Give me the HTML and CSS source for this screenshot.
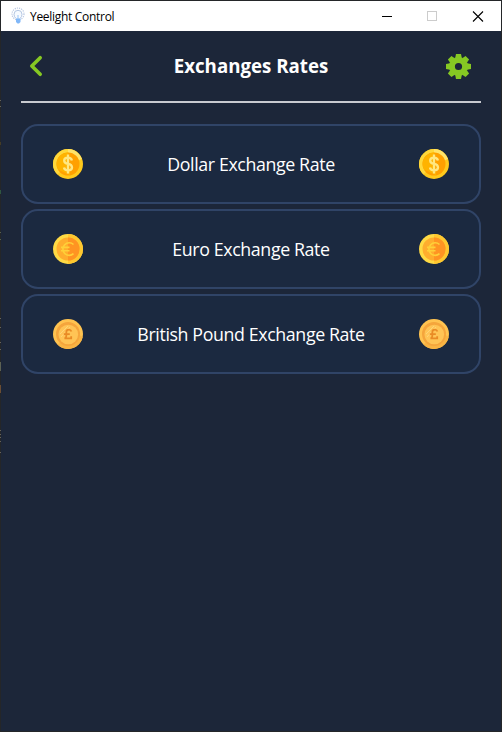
FILE: index.html
```html
<!DOCTYPE html>
<html lang="en">
<head>
<meta charset="utf-8">
<title>Yeelight Control</title>
<link rel="stylesheet" href="styles.css">
</head>
<body>
<svg class="defs" width="0" height="0" aria-hidden="true">
  <defs>
    <symbol id="dollar" viewBox="0 0 30 30">
      <circle cx="15" cy="15" r="15" fill="#ffc91c"/>
      <path d="M0 15A15 15 0 0 1 25.6 4.4L4.4 25.6A15 15 0 0 1 0 15Z" fill="#ffd83b"/>
      <path d="M15 0A15 15 0 0 1 29 10L24 12 15 3Z" fill="#ffe36a"/>
      <circle cx="15" cy="15" r="11.5" fill="#ffa000"/>
      <path d="M15 3.500A11.500 11.500 0 0 0 5 20.500L17 26Z" fill="#ffb300"/>
      <path d="M18.900 11.500Q18.300 8.700 15 8.700Q11.200 8.700 11.200 11.500Q11.200 14.200 15 14.900Q19 15.600 19 18.400Q19 21.300 15 21.300Q11.500 21.300 11 18.500M15 5.500V24.500" fill="none" stroke="#ffe782" stroke-width="2.300"/>
    </symbol>
    <symbol id="euro" viewBox="0 0 30 30">
      <circle cx="15" cy="15" r="15" fill="#ffda44"/>
      <path d="M15 0A15 15 0 0 1 15 30Z" fill="#ffc72f"/>
      <circle cx="15" cy="15" r="11.500" fill="#ffad2d"/>
      <path d="M15 3.500A11.500 11.500 0 0 1 15 26.500Z" fill="#ff9422"/>
      <path d="M20.500 10.500A6.300 6.300 0 1 0 20.500 19.700M8 13.400H16.500M8 16.800H16.500" fill="none" stroke="#ffd038" stroke-width="1.600"/>
    </symbol>
    <symbol id="pound" viewBox="0 0 30 30">
      <circle cx="15" cy="15" r="15" fill="#ffc350"/>
      <path d="M4.400 25.600A15 15 0 0 0 29.600 18L25 15 8 23Z" fill="#f9b443"/>
      <circle cx="15" cy="15" r="12" fill="#f5a53c"/>
      <circle cx="15.300" cy="15.500" r="9.800" fill="#ffc455"/>
      <path d="M7 15L15 7M8 18L17 8" stroke="#ffd477" stroke-width="1"/>
      <path d="M18.400 12.600Q17.800 10.600 15.900 10.600Q13.300 10.600 13.300 13V17Q13.300 19 11.500 19.400H18.200V17.300M10.800 15.200H16.800" fill="none" stroke="#e98b25" stroke-width="1.800"/>
    </symbol>
  </defs>
</svg>
<div class="window">
  <header class="titlebar">
    <svg class="bulb" viewBox="0 0 16 18" width="16" height="18">
      <circle cx="8" cy="7" r="6" fill="none" stroke="#b9c8e3" stroke-width="1.200" stroke-dasharray="1.200 1"/>
      <path d="M6 11.500Q4 9.800 4 7.300A4 4 0 0 1 12 7.300Q12 9.800 10 11.500" fill="#f6faff" stroke="#b3c6e2" stroke-width="1"/>
      <path d="M8 8V12" stroke="#9cc4f4" stroke-width="1"/>
      <path d="M6 11.500H10.500V15L9 16.500H7.500L6 15Z" fill="#80b7f8"/>
    </svg>
    <span class="app-name">Yeelight Control</span>
    <svg class="controls" viewBox="0 0 110 29" width="110" height="29">
      <path d="M5 14.500H15" stroke="#000"/>
      <rect x="50.500" y="9.500" width="9" height="9" fill="none" stroke="#ccc"/>
      <path d="M96 9.500L106 19.500M106 9.500L96 19.500" stroke="#000" stroke-width="1.100"/>
    </svg>
  </header>
  <main class="content">
    <div class="heading">
      <svg viewBox="-0.500 0 30 30" width="30" height="30"><path d="M18.700 6.700L10.300 15L18.700 23.300" fill="none" stroke="#86c823" stroke-width="3.600" stroke-linecap="round" stroke-linejoin="round"/></svg>
      <h1>Exchanges Rates</h1>
      <svg viewBox="-14.500 -15.500 30 30" width="30" height="30">
        <g fill="#86c823">
          <path fill-rule="evenodd" d="M-9.500 0A9.500 9.500 0 1 0 9.500 0A9.500 9.500 0 1 0 -9.500 0ZM-3.600 0A3.600 3.600 0 1 1 3.600 0A3.600 3.600 0 1 1 -3.600 0Z"/>
          <path id="teeth" d="M-3.300 -8.500L-2.500 -12.500H2.500L3.300 -8.500ZM-3.300 8.500L-2.500 12.500H2.500L3.300 8.500ZM-8.500 -3.300L-12.500 -2.500V2.500L-8.500 3.300ZM8.500 -3.300L12.500 -2.500V2.500L8.500 3.300Z"/>
          <use href="#teeth" transform="rotate(45)"/>
        </g>
      </svg>
    </div>
    <div class="rates">
      <div class="rate"><svg class="coin"><use href="#dollar"/></svg><span>Dollar Exchange Rate</span><svg class="coin"><use href="#dollar"/></svg></div>
      <div class="rate"><svg class="coin"><use href="#euro"/></svg><span>Euro Exchange Rate</span><svg class="coin"><use href="#euro"/></svg></div>
      <div class="rate"><svg class="coin"><use href="#pound"/></svg><span>British Pound Exchange Rate</span><svg class="coin"><use href="#pound"/></svg></div>
    </div>
  </main>
</div>
</body>
</html>
```
FILE: styles.css
```css
* { box-sizing: border-box; }
body { margin: 0; background: #1c2639; font-family: "Open Sans", "Noto Sans", sans-serif; }
.defs { position: absolute; }
.window {
  width: 502px; height: 732px; border: 1px solid #242629; display: flex; flex-direction: column; background: #1c2639;
  border-image: none;
}
/* Desktop showing along the window's left edge */
.window::before {
  content: ""; position: absolute; left: 0; top: 0; width: 1px; height: 732px;
  background: linear-gradient(#242629 100px, #65635c 100px 101px, #242629 101px 106px, #65635c 106px 107px, #242629 107px 142px, #443c25 142px 145px, #242629 145px 190px, #2f5640 190px 194px, #242629 194px 232px, #55604f 232px 233px, #242629 233px 239px, #55604f 239px 240px, #242629 240px 318px, #65635c 318px 319px, #242629 319px 327px, #65635c 327px 328px, #242629 328px 342px, #65635c 342px 343px, #242629 343px 349px, #65635c 349px 350px, #242629 350px 362px, #5c6153 362px 371px, #242629 371px 385px, #6b4d33 385px 393px, #242629 393px 430px, #65635c 430px 431px, #242629 431px 434px, #65635c 434px 435px, #242629 435px 437px, #65635c 437px 438px, #242629 438px 441px, #65635c 441px 442px, #242629 442px 452px, #65635c 452px 453px, #242629 453px);
}
.titlebar { height: 30px; background: #fff; display: flex; align-items: center; padding: 0 14px 0 9px; flex: none; }
.bulb { margin-right: 4px; }
.app-name { flex: 1; font-size: 12px; letter-spacing: -0.3px; color: #000; line-height: 29px; }
.content { padding: 20px 20px 0; }
.heading { height: 52px; border-bottom: 2px solid #c8cad0; display: flex; justify-content: space-between; align-items: flex-start; padding: 0 7px 0 0; }
.heading svg { display: block; }
h1 { margin: 0; padding-left: 7px; font-size: 18.700px; line-height: 30px; font-weight: 700; color: #fff; white-space: nowrap; }
.rates { display: grid; gap: 5px; margin-top: 21px; }
.rate { height: 80px; border: 2px solid #304467; border-radius: 17px; background: #1b2940; display: flex; align-items: center; justify-content: space-between; padding: 0 30px; color: #fff; font-size: 17.800px; letter-spacing: -0.380px; white-space: nowrap; }
.coin { width: 30px; height: 30px; display: block; }
```
